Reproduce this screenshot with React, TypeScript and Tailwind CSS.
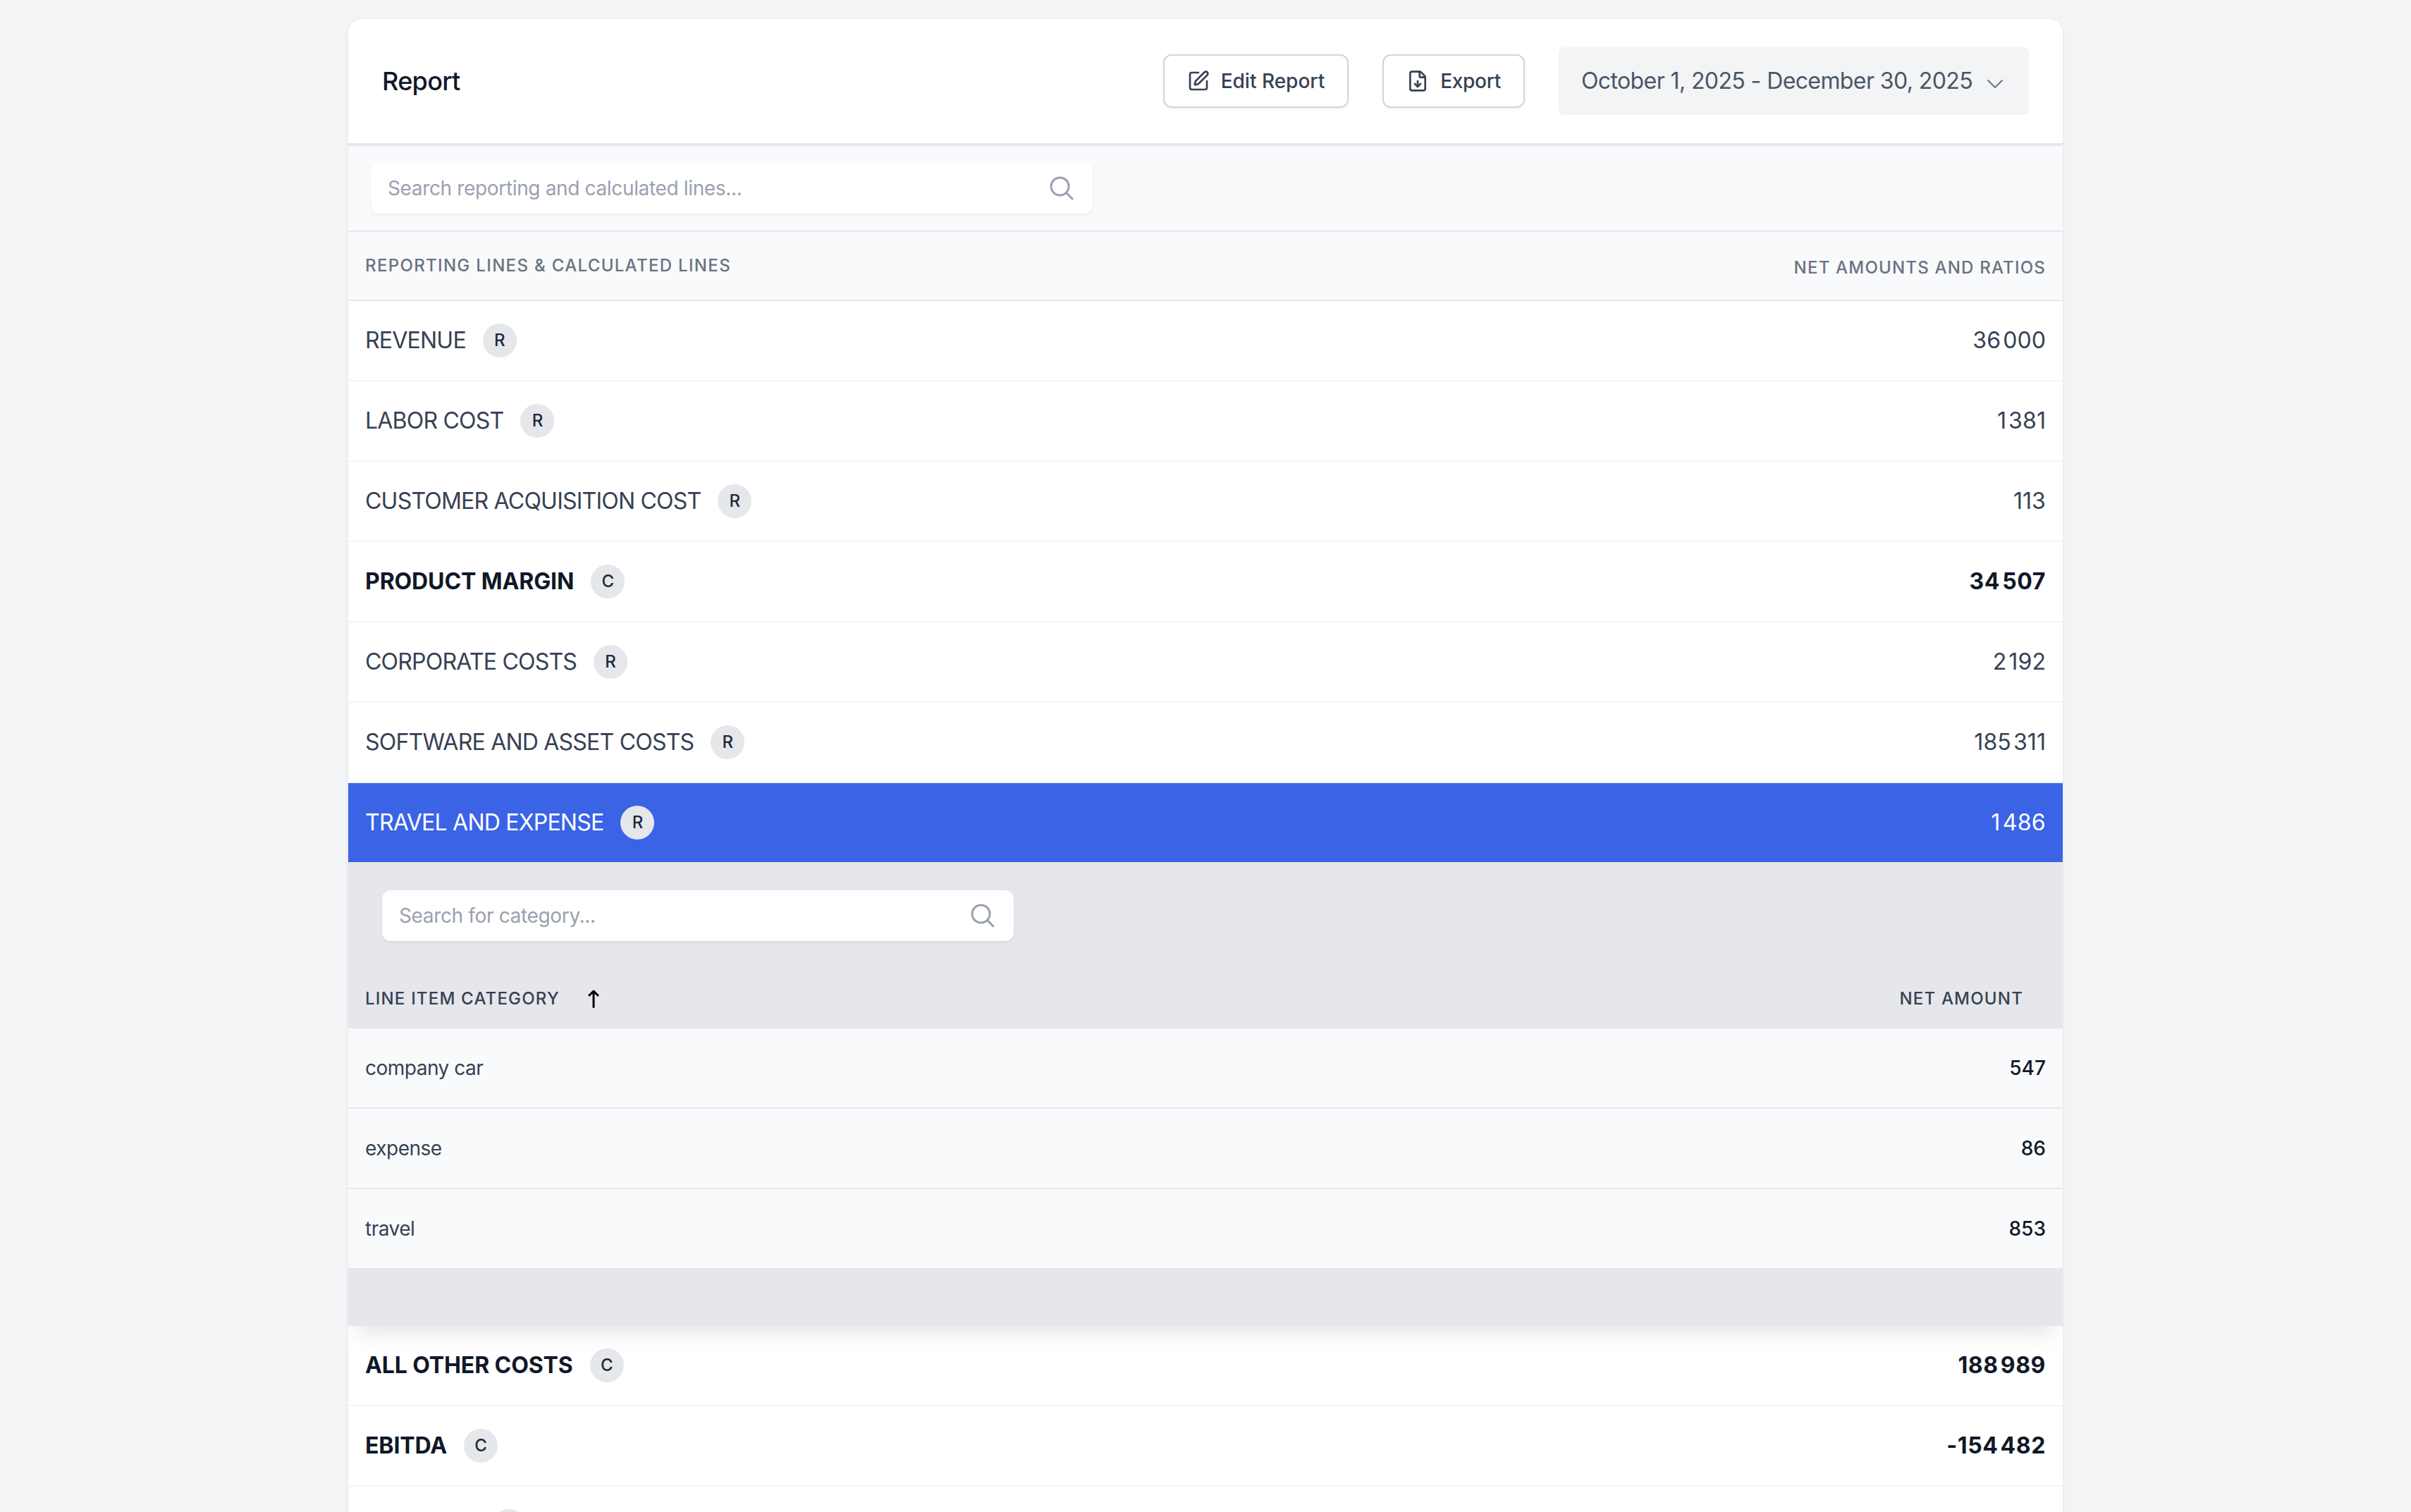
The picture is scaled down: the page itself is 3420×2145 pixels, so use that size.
import { FileDown, SquarePen } from "lucide-react";

type Line = { label: string; badge: string; value: string; bold?: boolean };

const topLines: Line[] = [
  { label: "REVENUE", badge: "R", value: "36\u200a000" },
  { label: "LABOR COST", badge: "R", value: "1\u200a381" },
  { label: "CUSTOMER ACQUISITION COST", badge: "R", value: "113" },
  { label: "PRODUCT MARGIN", badge: "C", value: "34\u200a507", bold: true },
  { label: "CORPORATE COSTS", badge: "R", value: "2\u200a192" },
  { label: "SOFTWARE AND ASSET COSTS", badge: "R", value: "185\u200a311" },
];

const bottomLines: Line[] = [
  { label: "ALL OTHER COSTS", badge: "C", value: "188\u200a989", bold: true },
  { label: "EBITDA", badge: "C", value: "-154\u200a482", bold: true },
  { label: "EBITDA %", badge: "C", value: "-429%", bold: true },
];

const categories = [
  { name: "company car", amount: "547" },
  { name: "expense", amount: "86" },
  { name: "travel", amount: "853" },
];

function Badge({ letter }: { letter: string }) {
  return (
    <span className="ml-6 flex h-12 w-12 shrink-0 items-center justify-center rounded-full bg-gray-200 text-2xl font-medium leading-none tracking-normal text-gray-800">
      {letter}
    </span>
  );
}

function LineRow({ line }: { line: Line }) {
  return (
    <div
      className={`flex h-[114px] items-center justify-between border-b-2 border-gray-100 bg-white px-6 text-[32px] ${
        line.bold ? "font-bold text-gray-900" : "font-normal text-gray-700"
      }`}
    >
      <div className="flex items-center">
        <span className={line.bold ? "tracking-[-0.1px]" : "tracking-[-0.78px]"}>{line.label}</span>
        <Badge letter={line.badge} />
      </div>
      <span className={line.bold ? "tracking-[0.6px]" : "tracking-[0.1px]"}>{line.value}</span>
    </div>
  );
}

function SearchBox({ placeholder, width }: { placeholder: string; width: string }) {
  return (
    <div className={`relative h-[72px] ${width}`}>
      <input
        readOnly
        placeholder={placeholder}
        className="h-full w-full rounded-xl bg-white pl-6 pr-20 text-[28px] tracking-[-0.35px] text-gray-700 shadow-[0_2px_4px_rgba(0,0,0,0.06)] outline-none placeholder:text-gray-400"
      />
      <svg
        viewBox="0 0 24 24"
        fill="none"
        stroke="currentColor"
        strokeWidth={1.8}
        strokeLinecap="round"
        strokeLinejoin="round"
        className="absolute right-6 top-4 h-10 w-10 text-gray-400"
      >
        <path d="M21 21l-5.197-5.197m0 0A7.5 7.5 0 105.196 5.196a7.5 7.5 0 0010.607 10.607z" />
      </svg>
    </div>
  );
}

export default function App() {
  return (
    <div className="h-[2145px] overflow-hidden bg-gray-100 pt-[27px] font-['Inter',sans-serif]">
      <div className="mx-auto w-[2432px] overflow-hidden rounded-t-[20px] bg-white shadow-[0_2px_4px_rgba(0,0,0,0.08)]">
        {/* header */}
        <div className="flex h-[180px] items-center justify-between border-b-4 border-gray-200 px-12">
          <h1 className="text-4xl font-medium tracking-[-0.7px] text-gray-900">Report</h1>
          <div className="flex items-center gap-12">
            <button className="flex h-[76px] items-center gap-4 rounded-xl border-2 border-gray-300 bg-white px-8 text-[28px] font-medium text-gray-700 shadow-[0_2px_3px_rgba(0,0,0,0.06)]">
              <SquarePen size={32} />
              Edit Report
            </button>
            <button className="flex h-[76px] items-center gap-4 rounded-xl border-2 border-gray-300 bg-white px-8 text-[28px] font-medium tracking-[-0.3px] text-gray-700 shadow-[0_2px_3px_rgba(0,0,0,0.06)]">
              <FileDown size={32} />
              Export
            </button>
            <button className="flex h-24 items-center gap-4 rounded-lg bg-gray-100 px-8 text-[32px] tracking-[-0.6px] text-gray-600">
              October 1, 2025 - December 30, 2025
              <svg
                viewBox="0 0 24 24"
                fill="none"
                stroke="currentColor"
                strokeWidth={1.5}
                strokeLinecap="round"
                strokeLinejoin="round"
                className="mt-2 h-8 w-8 text-gray-500"
              >
                <path d="M19.5 8.25l-7.5 7.5-7.5-7.5" />
              </svg>
            </button>
          </div>
        </div>

        {/* main search */}
        <div className="border-b-2 border-gray-200 bg-gray-50 py-6 pl-8">
          <SearchBox placeholder="Search reporting and calculated lines..." width="w-[1024px]" />
        </div>

        {/* table head */}
        <div className="flex h-[98px] items-center justify-between border-b-2 border-gray-200 bg-gray-50 px-6 text-2xl font-medium tracking-wider text-gray-500">
          <span className="tracking-[1.33px]">REPORTING LINES &amp; CALCULATED LINES</span>
          <span className="pt-1.5">NET AMOUNTS AND RATIOS</span>
        </div>

        {topLines.map((line) => (
          <LineRow key={line.label} line={line} />
        ))}

        {/* selected line */}
        <div className="flex h-28 items-center justify-between bg-[#3a63e5] px-6 text-[32px] text-white">
          <div className="flex items-center">
            <span className="tracking-[-0.78px]">TRAVEL AND EXPENSE</span>
            <Badge letter="R" />
          </div>
          <span className="tracking-[0.3px]">1{"\u200a"}486</span>
        </div>

        {/* expanded detail */}
        <div className="relative z-10 bg-gray-200 pt-10 shadow-[0_20px_30px_-12px_rgba(0,0,0,0.12)]">
          <div className="pl-12">
            <SearchBox placeholder="Search for category..." width="w-[896px]" />
          </div>
          <div className="mt-10 flex h-[84px] items-center justify-between pl-6 pr-14 text-2xl font-medium tracking-wider text-gray-700">
            <div className="flex items-center">
              <span>LINE ITEM CATEGORY</span>
              <svg
                viewBox="0 0 16 26"
                fill="none"
                stroke="black"
                strokeWidth={3}
                strokeLinecap="round"
                strokeLinejoin="round"
                className="ml-10 h-[26px] w-4"
              >
                <path d="M8 24.5V2M2 8l6-6 6 6" />
              </svg>
            </div>
            <span>NET AMOUNT</span>
          </div>
          {categories.map((row, i) => (
            <div
              key={row.name}
              className={`flex items-center justify-between bg-gray-50 px-6 text-[28px] text-gray-700 ${
                i < categories.length - 1 ? "h-[114px] border-b-2 border-gray-200" : "h-28"
              }`}
            >
              <span className="tracking-[-0.5px]">{row.name}</span>
              <span className="font-medium text-gray-900">{row.amount}</span>
            </div>
          ))}
          <div className="h-[82px]" />
        </div>

        {bottomLines.map((line) => (
          <LineRow key={line.label} line={line} />
        ))}
      </div>
    </div>
  );
}
